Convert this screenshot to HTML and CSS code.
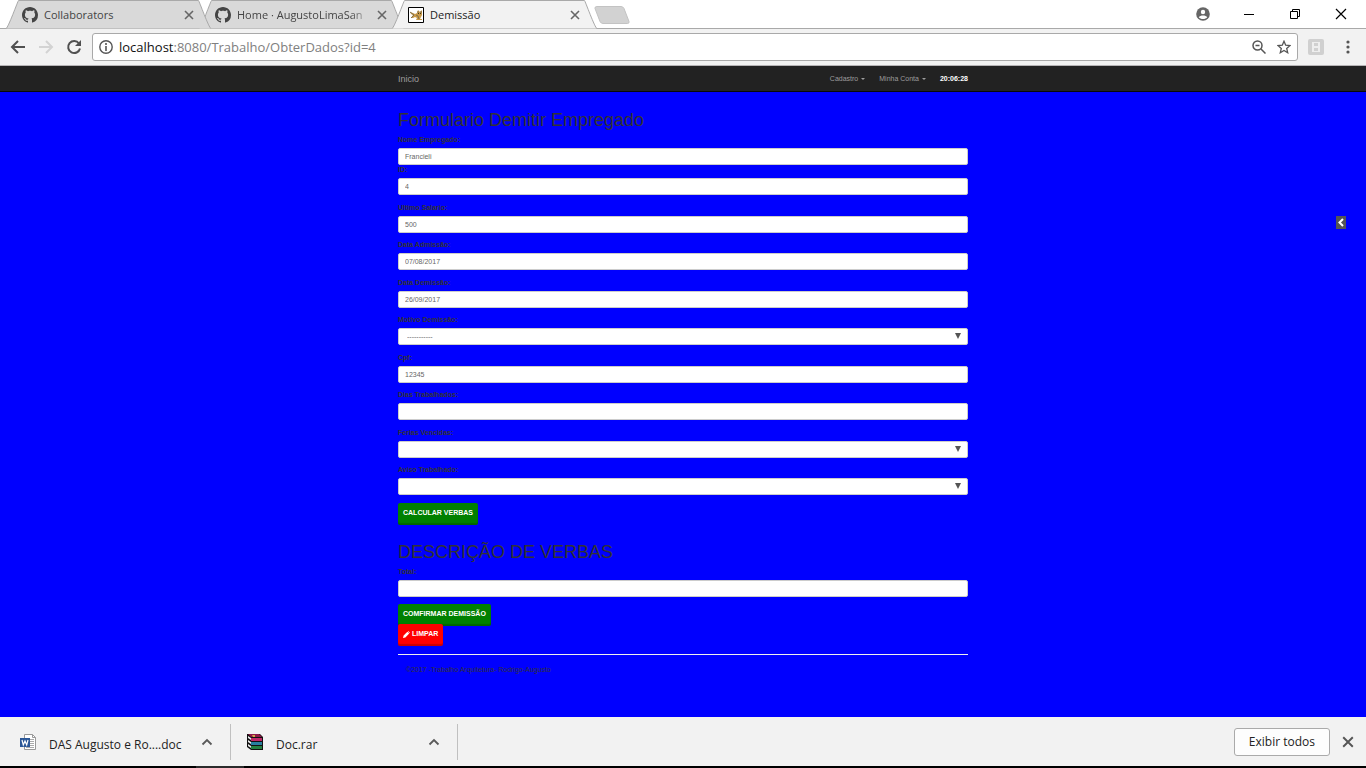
FILE: index.html
```html
<!DOCTYPE html>
<html lang="pt-BR">
<head>
<meta charset="utf-8">
<title>Demissão</title>
<link rel="stylesheet" href="styles.css">
</head>
<body class="window">
<svg class="sprites" aria-hidden="true">
  <symbol id="github" viewBox="0 0 16 16"><path d="M8 0C3.58 0 0 3.58 0 8c0 3.54 2.29 6.53 5.47 7.59.4.07.55-.17.55-.38 0-.19-.01-.82-.01-1.49-2.01.37-2.53-.49-2.69-.94-.09-.23-.48-.94-.82-1.13-.28-.15-.68-.52-.01-.53.63-.01 1.08.58 1.23.82.72 1.21 1.87.87 2.33.66.07-.52.28-.87.51-1.07-1.78-.2-3.64-.89-3.64-3.95 0-.87.31-1.59.82-2.15-.08-.2-.36-1.02.08-2.12 0 0 .67-.21 2.2.82.64-.18 1.32-.27 2-.27s1.36.09 2 .27c1.53-1.04 2.2-.82 2.2-.82.44 1.1.16 1.92.08 2.12.51.56.82 1.27.82 2.15 0 3.07-1.87 3.75-3.65 3.95.29.25.54.73.54 1.48 0 1.07-.01 1.93-.01 2.2 0 .21.15.46.55.38A8.01 8.01 0 0 0 16 8c0-4.42-3.58-8-8-8z" fill="#444"/></symbol>
  <symbol id="cross" viewBox="0 0 10 10"><path d="M1 1l8 8M9 1l-8 8" stroke="currentColor" stroke-width="1.6" fill="none"/></symbol>
  <symbol id="chevron" viewBox="0 0 12 8"><path d="M1.500 6.500L6 2l4.500 4.500" stroke="#5a5a5a" stroke-width="1.800" fill="none"/></symbol>
  <symbol id="tab" viewBox="0 0 205 29" preserveAspectRatio="none"><path d="M0 28.500C2 28.500 12 .5 12.500 .5H192.500C193 .5 203 28.500 205 28.500" fill="currentColor" stroke="#a9a9a9"/></symbol>
</svg>

<header class="browser">
  <div class="tabstrip">
    <div class="tab tab-first">
      <svg class="tab-shape"><use href="#tab"/></svg>
      <svg class="tab-icon"><use href="#github"/></svg>
      <span class="tab-title">Collaborators</span>
      <button class="tab-close" aria-label="Fechar guia"><svg><use href="#cross"/></svg></button>
    </div>
    <div class="tab">
      <svg class="tab-shape"><use href="#tab"/></svg>
      <svg class="tab-icon"><use href="#github"/></svg>
      <span class="tab-title tab-title-fade">Home · AugustoLimaSan</span>
      <button class="tab-close" aria-label="Fechar guia"><svg><use href="#cross"/></svg></button>
    </div>
    <div class="tab tab-active">
      <svg class="tab-shape"><use href="#tab"/></svg>
      <svg class="tab-icon" viewBox="0 0 16 16"><path d="M.5.5h15v15H.5z" fill="#fff" stroke="#000"/><path d="M2 5l3 1 2 1 2-1 1-3 2 2 2-2v5l-1 2-1 2h2v1H8l1-2-2-1-2 1H3l2-3-2-1z" fill="#c99a48"/><path d="M2 5l4 3-3 3M8 8l2 1 1 3M10 4v2M13 4v2" stroke="#80704c" fill="none"/><path d="M10 6h1v1h-1zM12 6h1v1h-1z" fill="#443818"/></svg>
      <span class="tab-title">Demissão</span>
      <button class="tab-close" aria-label="Fechar guia"><svg><use href="#cross"/></svg></button>
    </div>
    <button class="new-tab" aria-label="Nova guia"><svg viewBox="0 0 36 18"><path d="M3 .5h24q2 0 3 2l5 13q.5 2-1.500 2H9q-2 0-3-2L1 2.500Q.5.5 3 .5z" fill="#d2d2d2" stroke="#c3c3c3"/></svg></button>
    <div class="window-controls">
      <button aria-label="Perfil"><svg viewBox="0 0 14 14"><circle cx="7" cy="7" r="6.800" fill="#666"/><circle cx="7" cy="5" r="2.200" fill="#fff"/><path d="M2.800 10.200C4 7.900 10 7.900 11.200 10.200 9.500 12.600 4.500 12.600 2.800 10.200z" fill="#fff"/></svg></button>
      <button aria-label="Minimizar"><svg viewBox="0 0 14 14"><path d="M2 7.500h10" stroke="#000"/></svg></button>
      <button aria-label="Restaurar"><svg viewBox="0 0 14 14"><path d="M2.500 4.500h7v7h-7zM4.500 4.500v-2h7v7h-2" fill="none" stroke="#000"/></svg></button>
      <button aria-label="Fechar"><svg viewBox="0 0 14 14"><path d="M2 2l10 10M12 2L2 12" stroke="#000" stroke-width="1.200"/></svg></button>
    </div>
  </div>

  <div class="toolbar">
    <button class="tool" aria-label="Voltar"><svg viewBox="0 0 16 16"><path d="M15 8H2M8 2L2 8l6 6" fill="none" stroke="#505050" stroke-width="2"/></svg></button>
    <button class="tool" aria-label="Avançar" disabled><svg viewBox="0 0 16 16"><path d="M1 8h13M8 2l6 6-6 6" fill="none" stroke="#d3d3d3" stroke-width="2"/></svg></button>
    <button class="tool" aria-label="Recarregar"><svg viewBox="0 0 16 16"><path d="M13 4.500A6 6 0 1 0 14 9.500" fill="none" stroke="#505050" stroke-width="2"/><path d="M15 1v6H9z" fill="#505050"/></svg></button>
    <div class="omnibox">
      <svg class="omni-icon" viewBox="0 0 14 14"><circle cx="7" cy="7" r="6.200" fill="none" stroke="#555" stroke-width="1.400"/><path d="M7 6v5M7 3v2" stroke="#555" stroke-width="1.600"/></svg>
      <div class="url"><span class="url-host">localhost</span>:8080/Trabalho/ObterDados?id=4</div>
      <button aria-label="Zoom"><svg viewBox="0 0 14 14"><circle cx="5.500" cy="5.500" r="4.500" fill="none" stroke="#555" stroke-width="1.500"/><path d="M3.500 5.500h4M9 9l4.500 4.500" stroke="#555" stroke-width="1.500"/></svg></button>
      <button aria-label="Favoritar"><svg viewBox="0 0 14 14"><path d="M7 1.200l1.700 4 4.300.4-3.300 2.800 1 4.300L7 10.400l-3.700 2.300 1-4.300L1 5.600l4.300-.4z" fill="none" stroke="#555" stroke-width="1.300"/></svg></button>
    </div>
    <button class="tool" aria-label="Extensão"><svg viewBox="0 0 16 16"><rect width="16" height="16" rx="2" fill="#d0d0d0"/><path d="M4 3h8v10H4z" fill="#eee"/><path d="M6 4h4v3H6zM6 9h4v3H6z" fill="#d0d0d0"/></svg></button>
    <button class="tool tool-menu" aria-label="Menu"><svg viewBox="0 0 16 16"><g fill="#555"><circle cx="8" cy="3" r="1.600"/><circle cx="8" cy="8" r="1.600"/><circle cx="8" cy="13" r="1.600"/></g></svg></button>
  </div>
</header>

<div class="page">
  <nav class="navbar">
    <div class="container navbar-row">
      <a class="brand" href="#">Inicio</a>
      <div class="nav-links">
        <a class="nav-link" href="#">Cadastro <span class="caret"></span></a>
        <a class="nav-link" href="#">Minha Conta <span class="caret"></span></a>
        <b class="clock">20:06:28</b>
      </div>
    </div>
  </nav>

  <main class="container content">
    <form>
      <h2>Formulario Demitir Empregado</h2>
      <div class="field"><label for="nome">Nome Empregado:</label><input id="nome" value="Francieli"></div>
      <div class="fields">
        <div class="field"><label for="id">ID:</label><input id="id" value="4"></div>
        <div class="field"><label for="salario">Ultimo Salario:</label><input id="salario" value="500"></div>
        <div class="field"><label for="admissao">Data Admissão:</label><input id="admissao" value="07/08/2017"></div>
        <div class="field"><label for="demissao">Data Demissão:</label><input id="demissao" value="26/09/2017"></div>
        <div class="field"><label for="motivo">Motivo Demissão:</label><div class="select"><select id="motivo"><option>-----------</option></select></div></div>
        <div class="field"><label for="cpf">Cpf:</label><input id="cpf" value="12345"></div>
        <div class="field"><label for="dias">Dias Trabalhados:</label><input id="dias"></div>
        <div class="field"><label for="ferias">Ferias Vencidas:</label><div class="select"><select id="ferias"><option></option></select></div></div>
        <div class="field"><label for="aviso">Aviso Trabalhado:</label><div class="select"><select id="aviso"><option></option></select></div></div>
      </div>
      <button class="btn" type="button">Calcular Verbas</button>

      <h2 class="section-title">DESCRIÇÃO DE VERBAS</h2>
      <div class="field"><label for="total">Total:</label><input id="total"></div>
      <div class="actions">
        <button class="btn" type="button">Comfirmar Demissão</button>
        <button class="btn btn-danger" type="reset"><svg class="pencil" viewBox="0 0 7 7"><path d="M0 7l.6-2.400L4.400.8 6.200 2.600 2.400 6.400zM4.900.4L5.300 0 7 1.700l-.4.500z" fill="#fff"/></svg>Limpar</button>
      </div>
    </form>
    <footer class="footer">©2017 -Trabalho Arquitetura- Rodrigo-Augusto</footer>
  </main>
  <button class="drawer-handle" aria-label="Abrir painel"><svg viewBox="0 0 10 13"><path d="M7 3L3.500 6.500 7 10" fill="none" stroke="#fff" stroke-width="2"/></svg></button>
</div>

<div class="downloads">
  <div class="download">
    <svg class="file-icon" viewBox="0 0 16 16"><path d="M4.500.5h8l3 3v12h-11z" fill="#fff" stroke="#999"/><path d="M12.500.5v3h3" fill="none" stroke="#999"/><path d="M10 5.500h4M10 7.500h4M10 9.500h4M10 11.500h4M6 13.500h8" stroke="#aaa"/><path d="M0 4h10v9H0z" fill="#2b5797"/><path d="M2 6l1.300 5L5 7l1.700 4L8 6" fill="none" stroke="#fff" stroke-width="1.200"/></svg>
    <span class="file-name">DAS Augusto e Ro....doc</span>
    <button class="file-menu" aria-label="Opções do arquivo"><svg><use href="#chevron"/></svg></button>
  </div>
  <div class="download">
    <svg class="file-icon" viewBox="0 0 16 16"><path d="M0 0h13l3 3v13H4L0 13z" fill="#111"/><path d="M1 0h11l3 3H4z" fill="#8d1846"/><path d="M4 4h11v3H4z" fill="#c02868"/><path d="M4 8h11v3H4z" fill="#287fa0"/><path d="M4 12h11v3H4z" fill="#238040"/><path d="M1 2l3 2v2L1 4zM1 6l3 2v2L1 8zM1 10l3 2v2l-3-2z" fill="#eee"/><path d="M5 1h3v2H6z" fill="#d5a548"/></svg>
    <span class="file-name">Doc.rar</span>
    <button class="file-menu" aria-label="Opções do arquivo"><svg><use href="#chevron"/></svg></button>
  </div>
  <button class="show-all">Exibir todos</button>
  <button class="bar-close" aria-label="Fechar barra de downloads"><svg><use href="#cross"/></svg></button>
</div>
<div class="taskbar"><span class="taskbar-item"></span></div>
</body>
</html>
```

FILE: styles.css
```css
* { box-sizing: border-box; }

body, h2 { margin: 0; }

button {
  padding: 0;
  border: 0;
  background: none;
  color: inherit;
  font: inherit;
}

svg { display: block; }

.sprites {
  position: absolute;
  width: 0;
  height: 0;
}

.window {
  display: flex;
  flex-direction: column;
  min-height: 100vh;
  background: #fff;
  font-family: "Open Sans", "Noto Sans", sans-serif;
  font-size: 12px;
}

/* Browser tabs */
.tabstrip {
  display: flex;
  height: 29px;
  padding-left: 6px;
  box-shadow: inset 0 -1px #a9a9a9;
}

.tab {
  position: relative;
  z-index: 1;
  display: flex;
  flex: 0 1 205px;
  align-items: center;
  gap: 6px;
  min-width: 0;
  margin-right: -12px;
  padding: 0 17px 0 16px;
  color: #444;
  font-size: 11px;
}

.tab-first { z-index: 2; }

.tab-active {
  z-index: 3;
  color: #222;
}

.tab-shape {
  position: absolute;
  inset: 0;
  z-index: -1;
  width: 100%;
  height: 29px;
  color: #d9d9d9;
}

.tab-active .tab-shape { color: #f2f2f2; }

.tab-icon {
  flex: none;
  width: 16px;
  height: 16px;
}

.tab-title {
  flex: 1;
  overflow: hidden;
  white-space: nowrap;
}

.tab-title-fade { mask-image: linear-gradient(to right, #000 85%, transparent); }

.tab-close { color: #666; }

.tab-close svg {
  width: 10px;
  height: 10px;
}

.new-tab {
  align-self: center;
  margin-left: 9px;
}

.new-tab svg {
  width: 36px;
  height: 18px;
}

.window-controls {
  display: flex;
  align-items: center;
  gap: 32px;
  margin-left: auto;
  padding: 0 18px 2px 0;
}

.window-controls svg {
  width: 14px;
  height: 14px;
}

/* Address bar */
.toolbar {
  display: flex;
  align-items: center;
  gap: 12px;
  height: 37px;
  padding: 0 10px;
  border-bottom: 1px solid #b6b4b6;
  background: #f2f2f2;
}

.tool svg {
  width: 16px;
  height: 16px;
}

.tool-menu { margin-left: 4px; }

.omnibox {
  display: flex;
  flex: 1;
  align-items: center;
  gap: 11px;
  height: 28px;
  margin: 0 -2px;
  padding: 0 6px;
  border: 1px solid #a9a9a9;
  border-radius: 3px;
  background: #fff;
}

.omnibox {
  margin-right: -2px;
}

.omnibox svg {
  width: 14px;
  height: 14px;
}

.url {
  flex: 1;
  margin-left: -5px;
  color: #808080;
  font-size: 13px;
}

.url-host { color: #111; }

/* Web page */
.page {
  position: relative;
  flex: 1;
  background: #00f;
  color: #333;
  font: 7px/10px "Liberation Sans", Arial, sans-serif;
}

.container {
  width: 100%;
  max-width: 570px;
  margin: 0 auto;
}

.navbar {
  border-bottom: 1px solid #080808;
  background: #222;
}

.navbar-row {
  display: flex;
  align-items: center;
  justify-content: space-between;
  height: 25px;
}

.brand, .nav-link {
  color: #9d9d9d;
  text-decoration: none;
}

.brand { font-size: 9px; }

.nav-links {
  display: flex;
  gap: 14px;
}

.nav-link {
  display: flex;
  align-items: center;
  gap: 3px;
}

.caret {
  border: 2px solid transparent;
  border-top-color: currentColor;
  border-bottom: 0;
}

.clock { color: #fff; }

.content { padding: 18px 0; }

h2 {
  margin-bottom: 5px;
  font-size: 18px;
  font-weight: 400;
  line-height: 20px;
}

.section-title { margin-top: 17px; }

.field {
  display: flex;
  flex-direction: column;
  gap: 3px;
}

.fields {
  display: grid;
  grid-auto-rows: 38px 37px;
  align-items: start;
}

label { font-weight: 700; }

input, select {
  width: 100%;
  height: 17px;
  padding: 0 6px;
  border: 1px solid #ccc;
  border-radius: 2px;
  background: #fff;
  color: #666;
  font: inherit;
  appearance: none;
}

select {
  display: block;
  padding-left: 8px;
}

.select { position: relative; }

.select::after {
  content: "";
  position: absolute;
  top: 5px;
  right: 7px;
  border: 3px solid transparent;
  border-top: 6px solid #555;
  border-bottom: 0;
  pointer-events: none;
}

.btn {
  display: flex;
  align-items: center;
  gap: 2px;
  height: 22px;
  padding: 0 5px 2px;
  border-radius: 2px;
  background: #008000;
  box-shadow: inset 0 -2px 1px #0003;
  color: #fff;
  font-weight: 700;
  text-transform: uppercase;
}

.btn-danger {
  margin-top: -2px;
  background: #f00;
}

.pencil {
  width: 7px;
  height: 7px;
}

.actions { margin-top: 7px; }

.footer {
  margin-top: 8px;
  padding: 10px 8px;
  border-top: 1px solid #eee;
}

.drawer-handle {
  position: absolute;
  top: 150px;
  right: 20px;
  background: #555;
}

.drawer-handle svg {
  width: 10px;
  height: 13px;
}

/* Downloads */
.downloads {
  display: flex;
  align-items: center;
  height: 49px;
  padding-right: 12px;
  background: #f2f2f2;
  color: #222;
}

.download {
  display: flex;
  flex: 0 1 227px;
  align-items: center;
  height: 36px;
  padding: 0 17px 0 16px;
  border-right: 1px solid #c0c0c0;
}

.download:first-child {
  flex-basis: 231px;
  padding-left: 20px;
}

.file-icon {
  flex: none;
  width: 16px;
  height: 16px;
}

.file-name {
  flex: 1;
  margin-left: 13px;
  padding-top: 5px;
  white-space: nowrap;
}

.file-menu svg {
  width: 12px;
  height: 8px;
}

.show-all {
  height: 28px;
  margin-left: auto;
  padding: 0 14px;
  border: 1px solid #aaa;
  border-radius: 3px;
  background: #fdfdfd;
}

.bar-close {
  margin-left: 12px;
  color: #555;
}

.bar-close svg {
  width: 12px;
  height: 12px;
}

.taskbar {
  display: flex;
  height: 2px;
  padding-left: 196px;
  background: #000;
}

.taskbar-item {
  width: 48px;
  background: #2b2b2b;
}
```
